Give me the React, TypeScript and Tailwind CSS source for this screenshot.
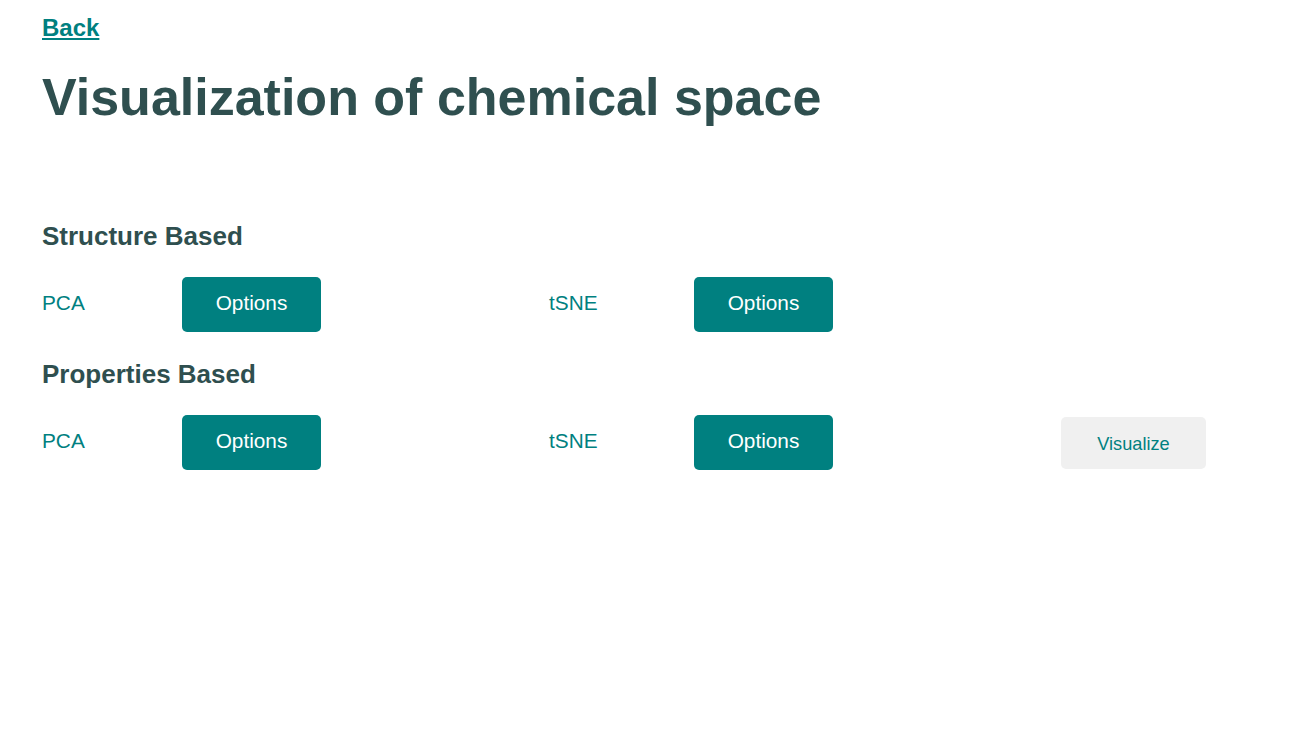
import { useState } from 'react'

// Chemical space visualization: pick a method, tweak options, visualize.

type Method = { label: string }

const sections: { title: string; methods: Method[]; action?: boolean }[] = [
  { title: 'Structure Based', methods: [{ label: 'PCA' }, { label: 'tSNE' }] },
  { title: 'Properties Based', methods: [{ label: 'PCA' }, { label: 'tSNE' }], action: true },
]

export default function App() {
  const [opened, setOpened] = useState<string | null>(null)

  return (
    <div className="min-h-screen bg-white px-[42px] pt-[12px] font-['Liberation_Sans',Arial,sans-serif]">
      <a href="#" className="text-[24px] font-bold leading-[32px] text-[#008080] underline">
        Back
      </a>
      <h1 className="mt-[23px] text-[52px] font-bold leading-[60px] text-[#2f4f4f]">
        Visualization of chemical space
      </h1>

      <div className="mt-[93px]">
        {sections.map((s) => (
          <section key={s.title} className="mb-[26px]">
            <h2 className="text-[26px] font-bold leading-[32px] text-[#2f4f4f]">{s.title}</h2>
            <div className="mt-[25px] grid grid-cols-[140px_367px_145px_367px_auto] items-center">
              {s.methods.map((m) => (
                <MethodCell
                  key={m.label}
                  label={m.label}
                  onOptions={() => setOpened(`${s.title}-${m.label}`)}
                />
              ))}
              {s.action && (
                <div>
                  <button
                    className="h-[52px] w-[145px] rounded-[5px] bg-[#f0f0f0] pt-[4px] text-[18.2px] text-[#008080]"
                    onClick={() => setOpened(null)}
                  >
                    Visualize
                  </button>
                </div>
              )}
            </div>
          </section>
        ))}
      </div>
      {opened && <span className="sr-only">{opened}</span>}
    </div>
  )
}

function MethodCell({ label, onOptions }: { label: string; onOptions: () => void }) {
  return (
    <>
      <span className="pb-[4px] text-[20.8px] text-[#008080]">{label}</span>
      <div>
        <button
          onClick={onOptions}
          className="h-[55px] w-[139px] rounded-[5px] bg-[#008080] pb-[4px] text-[20.8px] text-white"
        >
          Options
        </button>
      </div>
    </>
  )
}
